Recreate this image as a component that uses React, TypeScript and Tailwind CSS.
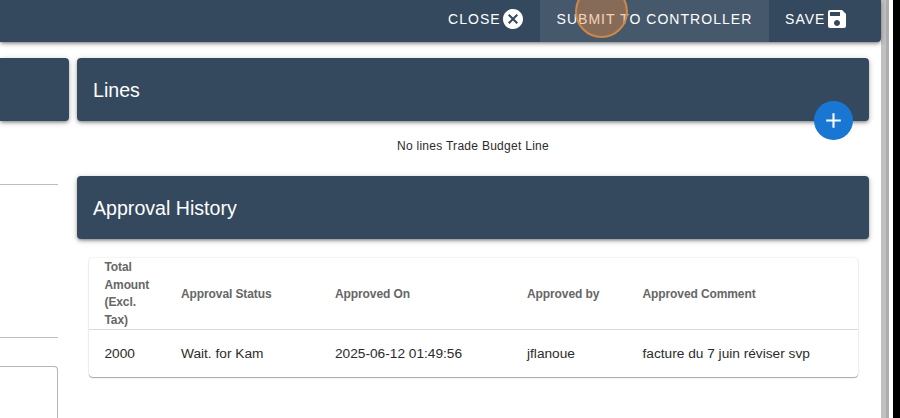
import { MdAdd, MdCancel, MdSave } from "react-icons/md";

const columns = [
  { title: "Total Amount (Excl. Tax)", value: "2000" },
  { title: "Approval Status", value: "Wait. for Kam" },
  { title: "Approved On", value: "2025-06-12 01:49:56" },
  { title: "Approved by", value: "jflanoue" },
  { title: "Approved Comment", value: "facture du 7 juin réviser svp" },
];

const grid = "grid grid-cols-[76.5px_154px_192px_115.5px_1fr] items-center pl-[15.5px]";
const elevation =
  "shadow-[0_2px_3px_-1px_rgba(0,0,0,0.3),0_2px_4px_rgba(0,0,0,0.18),0_1px_7px_rgba(0,0,0,0.14)]";

function PanelTitle({ children }: { children: string }) {
  return (
    <h2
      className={`flex h-[63px] items-center rounded-[4px] bg-[#34495e] pl-4 pt-[2px] text-[19.6px] text-white ${elevation}`}
    >
      {children}
    </h2>
  );
}

function Toolbar() {
  return (
    <header
      className={`relative flex h-[42px] shrink-0 justify-end rounded-br-[4px] bg-[#34495e] text-[14px] tracking-[1.04px] text-white ${elevation}`}
    >
      <button className="flex w-[108px] items-center whitespace-nowrap pb-[5px] pl-4">
        <span className="pt-[2px]">CLOSE</span>
        <MdCancel className="size-6 shrink-0" />
      </button>
      <button className="relative flex w-[229px] items-center whitespace-nowrap bg-[#46586b] pb-[5px] pl-[16.5px]">
        <span className="pt-[2px]">SUBMIT TO CONTROLLER</span>
        <span className="absolute left-[35px] top-[-15px] size-[53px] rounded-full border-2 border-[#cf8748] bg-[#e98a3f]/40" />
      </button>
      <button className="flex w-[112px] items-center whitespace-nowrap pb-[5px] pl-4">
        <span className="pt-[2px]">SAVE</span>
        <MdSave className="size-6 shrink-0" />
      </button>
    </header>
  );
}

export default function App() {
  return (
    <div className="flex h-[418px] w-[900px] overflow-hidden bg-white font-['Liberation_Sans',Arial,sans-serif] text-[#2b2b2b]">
      <div className="flex w-[881px] shrink-0 flex-col">
        <Toolbar />
        <main className="flex flex-1 pt-4">
          <section className="w-[77px] shrink-0">
            <div className={`h-[63px] w-[69px] rounded-r-[4px] bg-[#34495e] ${elevation}`} />
            <div className="mt-[63px] h-px w-[58px] bg-[#bcbcbc]" />
            <div className="mt-[152px] h-px w-[58px] bg-[#bcbcbc]" />
            <div className="mt-[28px] h-[60px] w-[58px] rounded-tr-[4px] border-r border-t border-[#b5b5b5]" />
          </section>
          <section className="w-[792px] shrink-0">
            <div className="relative">
              <PanelTitle>Lines</PanelTitle>
              <button className="absolute right-[16px] top-[43px] flex size-[39px] items-center justify-center rounded-full bg-[#1976d2] text-white">
                <MdAdd className="size-[25px]" />
              </button>
            </div>
            <p className="flex h-[55px] items-center justify-center pb-[5px] text-[12px] tracking-[0.28px]">
              No lines Trade Budget Line
            </p>
            <PanelTitle>Approval History</PanelTitle>
            <div className="ml-3 mr-[11px] mt-[19px] h-[119px] rounded-[4px] shadow-[0_1px_1px_rgba(0,0,0,0.32),0_0_2px_rgba(0,0,0,0.16)]">
              <div
                className={`${grid} h-[72px] border-b border-[#dadada] pt-px text-[12px] font-bold leading-[17.7px] tracking-[-0.1px] text-[#666]`}
              >
                {columns.map((c) => (
                  <div key={c.title} className="first:w-[50px]">
                    {c.title}
                  </div>
                ))}
              </div>
              <div className={`${grid} h-[47px] pt-px text-[13.7px]`}>
                {columns.map((c) => (
                  <div key={c.title}>{c.value}</div>
                ))}
              </div>
            </div>
          </section>
        </main>
      </div>
      <div className="w-[5px] bg-[#c1c1c1]" />
      <div className="w-[3px] bg-[#adadad]" />
      <div className="w-[4px] bg-white" />
      <div className="w-[7px] bg-black" />
    </div>
  );
}
